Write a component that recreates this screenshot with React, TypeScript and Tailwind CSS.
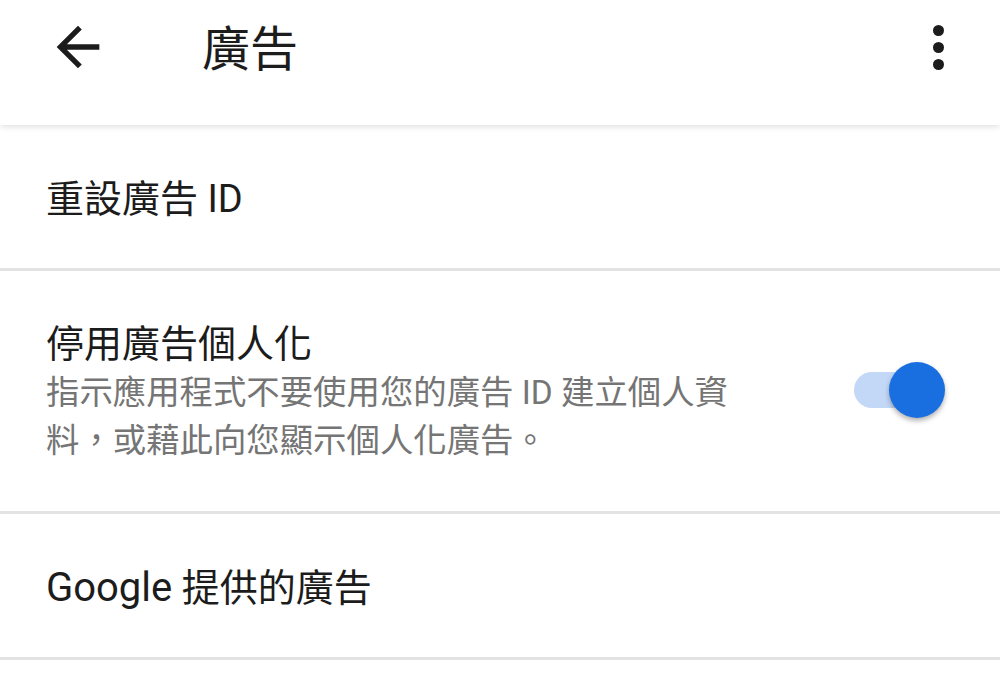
const font = { fontFamily: 'Roboto, "Noto Sans CJK TC", sans-serif' };

function Divider() {
    return <div className="h-[3px] bg-[#e3e3e3]"></div>;
}

function BackArrow() {
    return (
        <svg width="64" height="64" viewBox="0 0 24 24" className="text-[#1c1c1c]">
            <path d="M20 11H7.83l5.59-5.59L12 4l-8 8 8 8 1.41-1.41L7.83 13H20v-2z" fill="currentColor" />
        </svg>
    );
}

function Toggle({ on }: { on: boolean }) {
    return (
        <div className="relative w-[92px] h-[56px] shrink-0">
            <div className="absolute left-0 top-[10px] w-[70px] h-[36px] rounded-full bg-[#c3d7f6]"></div>
            <div
                className={`absolute top-0 w-[56px] h-[56px] rounded-full shadow-[0_3px_5px_rgba(0,0,0,0.3)] ${on ? 'left-[35px] bg-[#1a6fe0]' : 'left-0 bg-white'}`}
            ></div>
        </div>
    );
}

export default function App() {
    return (
        <div className="w-[1000px] h-[683px] bg-white overflow-hidden font-normal" style={font}>
            {/* Toolbar */}
            <div className="relative z-10 h-[125px] bg-white shadow-[0_2px_6px_rgba(0,0,0,0.12)] flex items-start">
                <div className="w-[64px] ml-[46px] mt-[15px]">
                    <BackArrow />
                </div>
                <h1 className="ml-[92px] mt-[20px] text-[48px] leading-[60px] text-[#1c1c1c]">廣告</h1>
                <div className="ml-auto mr-[56px] mt-[25px] flex flex-col items-center gap-[6px]">
                    <span className="w-[11px] h-[11px] rounded-full bg-[#1c1c1c]"></span>
                    <span className="w-[11px] h-[11px] rounded-full bg-[#1c1c1c]"></span>
                    <span className="w-[11px] h-[11px] rounded-full bg-[#1c1c1c]"></span>
                </div>
            </div>

            {/* Reset ad ID */}
            <div className="h-[143px] flex items-center px-[46px] pt-[6px]">
                <span className="text-[38px] text-[#1c1c1c]">重設廣告 ID</span>
            </div>
            <Divider />

            {/* Opt out of personalization */}
            <div className="h-[240px] flex items-start px-[46px] pt-[48px]">
                <div className="flex-1">
                    <div className="text-[38px] leading-[50px] text-[#1c1c1c]">停用廣告個人化</div>
                    <div className="text-[33.4px] leading-[48px] text-[#757575]">
                        指示應用程式不要使用您的廣告 ID 建立個人資
                        <br />
                        料，或藉此向您顯示個人化廣告。
                    </div>
                </div>
                <div className="mt-[43px] mr-[8px]">
                    <Toggle on />
                </div>
            </div>
            <Divider />

            {/* Ads by Google */}
            <div className="h-[143px] flex items-center px-[46px] pt-[5px]">
                <span className="text-[38px] text-[#1c1c1c]">
                    <span className="text-[40px]">Google</span> 提供的廣告
                </span>
            </div>
            <Divider />
        </div>
    );
}
